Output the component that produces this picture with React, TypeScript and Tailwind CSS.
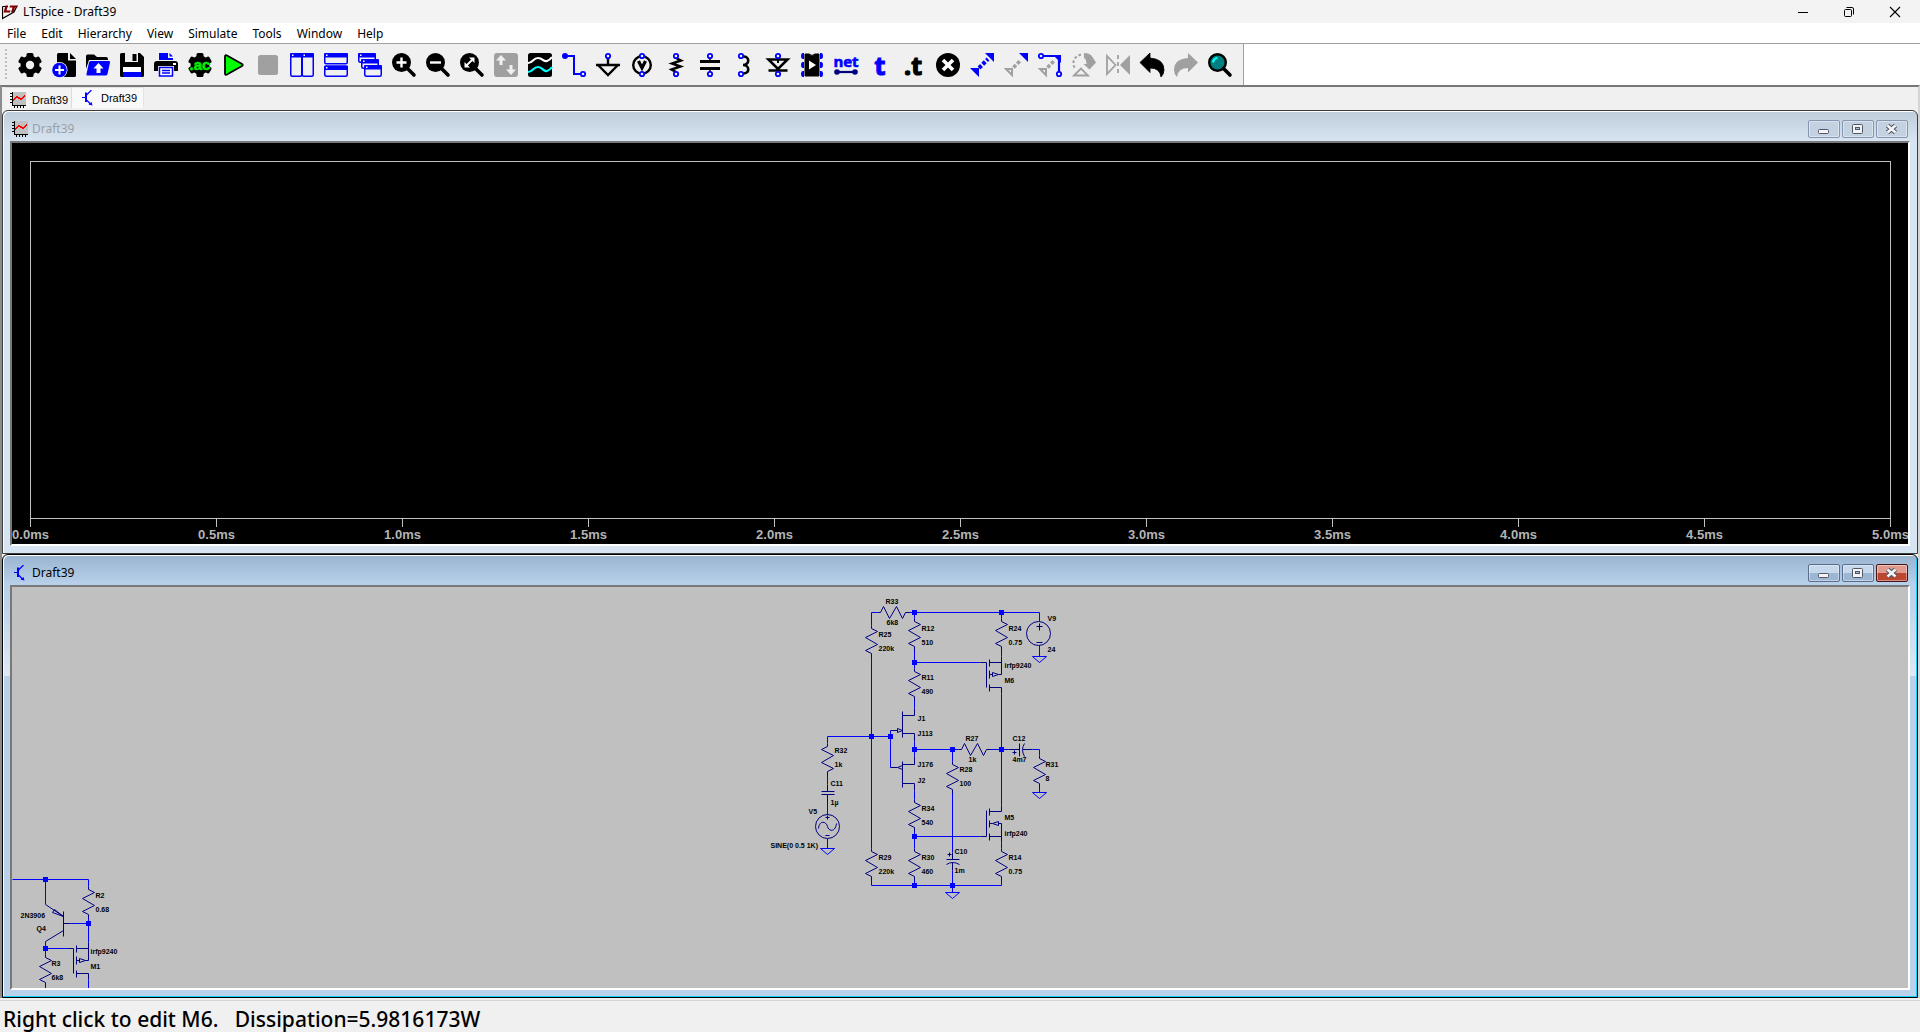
import React from 'react';

const BLUE = '#0000ff';
const NAVY = '#000080';
const GREY = '#a0a0a0';

const MENUS = ['File', 'Edit', 'Hierarchy', 'View', 'Simulate', 'Tools', 'Window', 'Help'];

const TICKS = ['0.0ms', '0.5ms', '1.0ms', '1.5ms', '2.0ms', '2.5ms', '3.0ms', '3.5ms', '4.0ms', '4.5ms', '5.0ms'];

/* ---------- toolbar icons, all drawn on a 24x24 grid ---------- */

const Gear = ({ hole = true }: { hole?: boolean }) => (
  <>
    <circle cx="12" cy="12" r="9.5" />
    {[0, 60, 120].map((a) => (
      <rect key={a} x="8.5" y="0" width="7" height="24" rx="1.5" transform={`rotate(${a} 12 12)`} />
    ))}
    {hole && <circle cx="12" cy="12" r="4.2" fill="#f0f0f0" />}
  </>
);

const Lens = () => (
  <>
    <circle cx="9.5" cy="9.5" r="9.5" />
    <path d="M15 15L22 22" stroke="#000" strokeWidth="3.6" strokeLinecap="round" />
  </>
);

// small open terminal used on the component icons
const Pin = ({ x, y }: { x: number; y: number }) => (
  <circle cx={x} cy={y} r="2.2" fill="#f0f0f0" stroke={BLUE} strokeWidth="1.8" />
);

// miniature window frame
const Pane = ({ x, y, w, h }: { x: number; y: number; w: number; h: number }) => (
  <g>
    <rect x={x + 0.75} y={y + 0.75} width={w - 1.5} height={h - 1.5} rx="1.5" fill="#f0f0f0" stroke={BLUE} strokeWidth="1.5" />
    <rect x={x} y={y} width={w} height="4.5" rx="1.2" fill={BLUE} />
    <rect x={x + 2} y={y + 1.5} width="1.5" height="1.5" fill="#fff" />
  </g>
);

const TOOLS: { label: string; art: React.ReactNode }[] = [
  { label: 'Settings', art: <Gear /> },
  {
    label: 'New schematic',
    art: (
      <>
        <path d="M5 1.5Q5 0 6.500 0H16V7.500H24V22.500Q24 24 22.500 24H5z" />
        <path d="M18 0L24 6H18z" />
        <circle cx="7.500" cy="17" r="8" fill="#f0f0f0" />
        <circle cx="7.500" cy="17" r="7.300" fill={BLUE} />
        <path d="M7.500 12.500V21.500M3 17H12" stroke="#fff" strokeWidth="2" />
      </>
    ),
  },
  {
    label: 'Open',
    art: (
      <>
        <path d="M0 3Q0 1.500 1.500 1.500H8L11 4H20Q22 4 22 6V7H3L0 16z" />
        <path d="M4.500 8H23Q24.500 8 24 9.500L21.500 21Q21 22.500 19.500 22.500H1.500Q0 22.500 .5 21L3 9.500Q3.500 8 4.500 8z" fill={BLUE} />
        <path d="M12.500 10L17.500 15.500H14.500V20H10.500V15.500H7.500z" fill="#fff" />
      </>
    ),
  },
  {
    label: 'Save',
    art: (
      <>
        <path d="M0 1.500Q0 0 1.500 0H20L24 4V22.500Q24 24 22.500 24H1.500Q0 24 0 22.500z" />
        <path d="M5 0H18V9H5z" fill="#f0f0f0" />
        <path d="M12.500 1H16.500V8H12.500z" />
        <path d="M3 14H21V19H3z" fill="#fff" />
        <path d="M3 19H21V24H3z" fill={BLUE} />
      </>
    ),
  },
  {
    label: 'Print',
    art: (
      <>
        <path d="M5 0H14V5H19V7H5z" fill={BLUE} />
        <path d="M15.500 0L19 3.500H15.500z" fill={BLUE} />
        <path d="M0 11Q0 8 3 8H21Q24 8 24 11V18H0z" />
        <path d="M19 10H22V12H19z" fill="#fff" />
        <path d="M4 13H20V24H4z" fill="#f0f0f0" />
        <path d="M5.500 14.500H18.500V23H5.500z" fill="#fff" stroke={BLUE} strokeWidth="1.500" />
        <path d="M8 17.500H16M8 20H16" stroke={BLUE} strokeWidth="1.300" />
      </>
    ),
  },
  {
    label: 'AC analysis',
    art: (
      <>
        <Gear hole={false} />
        <text x="12" y="16.500" textAnchor="middle" fill="#00f000" stroke="#00f000" strokeWidth="0.500" className="font-['Liberation_Sans'] text-[15px] font-bold">.ac</text>
      </>
    ),
  },
  { label: 'Run', art: <path d="M3 3.500Q3 1.500 5 2.500L20 11Q21.500 12 20 13L5 21.500Q3 22.500 3 20.500z" fill="#00ff00" stroke="#000" strokeWidth="1.800" /> },
  { label: 'Stop', art: <rect x="2" y="2" width="20" height="20" rx="2.500" fill={GREY} /> },
  { label: 'Tile vertically', art: <><Pane x={0} y={0} w={12.5} h={24} /><Pane x={11.5} y={0} w={12.5} h={24} /></> },
  { label: 'Tile horizontally', art: <><Pane x={0} y={0} w={24} h={11.5} /><Pane x={0} y={12.5} w={24} h={11.5} /></> },
  { label: 'Cascade', art: <><Pane x={0} y={0} w={18} h={10} /><Pane x={3} y={6} w={18} h={10} /><Pane x={6} y={12} w={18} h={12} /></> },
  { label: 'Zoom in', art: <><Lens /><path d="M9.500 4.500V14.500M4.500 9.500H14.500" stroke="#fff" strokeWidth="2.400" /></> },
  { label: 'Zoom out', art: <><Lens /><path d="M4 9.500H15" stroke="#fff" strokeWidth="2.400" /></> },
  {
    label: 'Zoom to fit',
    art: (
      <>
        <Lens />
        <path d="M6 13L13 6" stroke="#fff" strokeWidth="1.800" />
        <path d="M9 4.500H14.500V10zM4.500 9V14.500H10z" fill="#fff" />
      </>
    ),
  },
  {
    label: 'Autorange',
    art: (
      <>
        <rect width="24" height="24" rx="3" fill={GREY} />
        <path d="M7 2L12 7.500H8.500V12H5.500V7.500H2zM17 22L12 16.500H15.500V12H18.500V16.500H22z" fill="#f0f0f0" />
      </>
    ),
  },
  {
    label: 'Plot settings',
    art: (
      <>
        <rect width="24" height="24" rx="2.500" />
        <path d="M0 10C5 10 5 5 10 5S15 9 19 8Q22 7 24 4" fill="none" stroke="#fff" strokeWidth="2.200" />
        <path d="M0 19C5 19 5 14 10 14S15 19 19 18Q22 17 24 14" fill="none" stroke="#00ffff" strokeWidth="2.200" />
      </>
    ),
  },
  {
    label: 'Wire',
    art: (
      <>
        <path d="M3 3H12V21H19" fill="none" stroke={BLUE} strokeWidth="2" />
        <circle cx="3" cy="3" r="3" fill={BLUE} />
        <Pin x={21} y={21} />
      </>
    ),
  },
  { label: 'Ground', art: <><path d="M12 4V11M0 12H24M2.500 12.500L12 22L21.500 12.500" fill="none" stroke="#000" strokeWidth="2.400" /><Pin x={12} y={3} /></> },
  {
    label: 'Voltage source',
    art: (
      <>
        <circle cx="12" cy="12" r="8.800" fill="none" stroke="#000" strokeWidth="2.400" />
        <path d="M8.500 8L12 15L15.500 8" fill="none" stroke="#000" strokeWidth="3.200" />
        <Pin x={12} y={3} /><Pin x={12} y={21} />
      </>
    ),
  },
  { label: 'Resistor', art: <><path d="M12 5L17 7.500L8 10.500L16.500 13.500L7.500 16.500L12 19" fill="none" stroke="#000" strokeWidth="2.400" /><Pin x={12} y={3} /><Pin x={12} y={21} /></> },
  { label: 'Capacitor', art: <><path d="M2 8.500H22M2 15.500H22" stroke="#000" strokeWidth="2.800" /><path d="M12 4V8M12 16V20" stroke="#000" strokeWidth="1.500" /><Pin x={12} y={3} /><Pin x={12} y={21} /></> },
  { label: 'Inductor', art: <><path d="M11 3.500C18 3 18 12 11 12C18 12 18 21 11 20.500" fill="none" stroke="#000" strokeWidth="2.600" /><Pin x={9} y={3} /><Pin x={9} y={21} /></> },
  { label: 'Diode', art: <><path d="M2.500 6.500H21.500L12 16zM2.500 17.500H21.500" fill="none" stroke="#000" strokeWidth="2.600" /><path d="M12 7V10" stroke="#000" strokeWidth="2" /><Pin x={12} y={3} /><Pin x={12} y={21} /></> },
  {
    label: 'Component',
    art: (
      <>
        <path d="M5 1H9Q12 4 15 1H19V23H5z" stroke="#000" strokeWidth="1" />
        <path d="M9 7.500V16.500L16 12z" fill="#fff" />
        {[3, 12, 21].map((y) => (
          <React.Fragment key={y}>
            <path d={`M4 ${y - 3}H3Q1 ${y - 3} 1 ${y}T3 ${y + 3}H4z`} fill={BLUE} />
            <path d={`M20 ${y - 3}H21Q23 ${y - 3} 23 ${y}T21 ${y + 3}H20z`} fill={BLUE} />
          </React.Fragment>
        ))}
      </>
    ),
  },
  {
    label: 'Label net',
    art: (
      <>
        <text x="12" y="14" textAnchor="middle" fill={BLUE} stroke={BLUE} strokeWidth="0.600" className="font-['Open_Sans'] text-[15px] font-bold">net</text>
        <path d="M3 19H21" stroke={NAVY} strokeWidth="2.200" />
        <circle cx="3" cy="19" r="2.800" fill={NAVY} />
        <circle cx="21" cy="19" r="2.800" fill={NAVY} />
      </>
    ),
  },
  { label: 'Text', art: <text x="12" y="21.500" textAnchor="middle" fill={BLUE} stroke={BLUE} strokeWidth="1.200" className="font-['Open_Sans'] text-[25px] font-bold">t</text> },
  { label: 'SPICE directive', art: <text x="11" y="21.500" textAnchor="middle" stroke="#000" strokeWidth="1.200" className="font-['Open_Sans'] text-[25px] font-bold">.t</text> },
  { label: 'Delete', art: <><circle cx="12" cy="12" r="12" /><path d="M7 7L17 17M17 7L7 17" stroke="#fff" strokeWidth="3.600" /></> },
  {
    label: 'Move',
    art: <><path d="M15 0H24V9zM0 15H9V24z" fill={BLUE} /><path d="M9 15L18 6" stroke={BLUE} strokeWidth="4" strokeDasharray="3.500 1.800" /></>,
  },
  {
    label: 'Copy',
    art: <><path d="M15 0H24V9z" fill={BLUE} /><path d="M2 16H8V22z" fill="none" stroke={GREY} strokeWidth="2" /><path d="M9.500 14.500L17 7" stroke={GREY} strokeWidth="3.600" strokeDasharray="3.500 1.800" /></>,
  },
  {
    label: 'Drag',
    art: (
      <>
        <path d="M3 3H21V21" fill="none" stroke={BLUE} strokeWidth="2.200" />
        <path d="M15 2H23V10z" fill={BLUE} />
        <path d="M2 16H8V22z" fill="none" stroke={GREY} strokeWidth="2" />
        <path d="M9.500 14.500L16 8" stroke={GREY} strokeWidth="3.600" strokeDasharray="3.500 1.800" />
        <Pin x={3} y={3} /><Pin x={21} y={21} />
      </>
    ),
  },
  {
    label: 'Rotate',
    art: (
      <>
        <path d="M12 0C16 0 19 1.500 20.500 4L24 9.500L17.500 16.500L11.500 11H14.500C14.500 7 13 5.500 12 5z" fill={GREY} />
        <path d="M9 1.500Q1 4 1.500 11Q1.500 14 4 16" fill="none" stroke={GREY} strokeWidth="2" strokeDasharray="2.600 2.200" />
        <path d="M2 22.500L9 15.500L16 22.500z" fill="none" stroke={GREY} strokeWidth="1.800" />
      </>
    ),
  },
  {
    label: 'Mirror',
    art: <><path d="M1 3V21L9.500 12z" fill="none" stroke={GREY} strokeWidth="1.800" /><path d="M24 2V22L14 12z" fill={GREY} /><path d="M12 2V22" stroke={GREY} strokeWidth="1.800" strokeDasharray="4 3" /></>,
  },
  { label: 'Undo', art: <path d="M10 0V5Q24 6 24 17Q24 21 21 24Q20 15 10 15V19.500L0 9.500z" stroke="#000" strokeWidth="0.800" strokeLinejoin="round" /> },
  { label: 'Redo', art: <path d="M14 0V5Q0 6 0 17Q0 21 3 24Q4 15 14 15V19.500L24 9.500z" fill={GREY} /> },
  {
    label: 'Find',
    art: (
      <>
        <circle cx="9.500" cy="9.500" r="8.300" fill="#008080" stroke="#000" strokeWidth="2.400" />
        <path d="M15.500 15.500L22 22" stroke="#000" strokeWidth="3.600" strokeLinecap="round" />
        <path d="M5 9.500Q5.500 5.500 9.500 5" fill="none" stroke="#00ffff" strokeWidth="2.200" />
      </>
    ),
  },
];

/* ---------- document icons ---------- */

const WaveIcon = () => (
  <svg width="16" height="16" shapeRendering="crispEdges">
    <path d="M2 0H16V14H2z" fill="#c0c0c0" />
    <path d="M2.500 0V14M2 13.500H16M0 1.500H2M0 4.500H2M0 7.500H2M0 10.500H2M4.500 14V16M7.500 14V16M10.500 14V16M13.500 14V16" stroke="#000" />
    <path d="M3 8.500L7 5L11 7L15.500 3.500" fill="none" stroke="#f00" strokeWidth="1.500" />
  </svg>
);

const TransistorIcon = () => (
  <svg width="16" height="16">
    <path d="M2 7.500H6M11.500 0L6.500 5M6.500 10L11 14.500" stroke={BLUE} strokeWidth="1.200" />
    <path d="M6 2.500V12" stroke={BLUE} strokeWidth="2" />
    <path d="M12.500 15.500L8.500 14.500L11.500 12z" fill={BLUE} />
  </svg>
);

/* ---------- schematic ---------- */

const resistorsV: [number, number][] = [
  [871, 625], [914, 618], [914, 668], [1001, 618], [914, 799], [914, 848],
  [871, 848], [1001, 848], [952, 761], [1039, 755], [88, 886], [45, 954],
];

const grounds: [number, number][] = [[1039, 656], [827, 848], [952, 892], [1039, 792]];

const nodes: [number, number][] = [
  [914, 612], [1001, 612], [914, 662], [871, 736], [890, 736], [914, 749], [952, 749], [1001, 749],
  [914, 836], [914, 885], [952, 885], [45, 879], [88, 923], [45, 948],
];

const WIRES = [
  'M871 625V612H877M908 612H1039V621M914 612V618M1001 612V618M1001 649V656M914 649V668M914 662H980',
  'M871 656V848M871 879V885H1001V879M914 879V885M952 870V892M827 743V736H890M890 730V767',
  'M914 699V708M914 741V756M914 749H958M989 749H1008M1032 749H1039V755M952 749V761M952 792V852',
  'M1001 693V805M914 830V848M914 836H980M1001 842V848M914 790V799M827 774V784M827 800V814M827 838V848',
  'M1039 645V656M1039 786V792',
  'M12 879H88V886M45 879V904M88 917V942M70 923H88M45 941V954M45 948H68M88 979V988M45 985V988',
];

const LABELS: [number, number, string][] = [
  [886, 604, 'R33'], [887, 625, '6k8'], [879, 637, 'R25'], [879, 651, '220k'],
  [922, 631, 'R12'], [922, 645, '510'], [1009, 631, 'R24'], [1009, 645, '0.75'],
  [1048, 621, 'V9'], [1048, 652, '24'], [1005, 668, 'irfp9240'], [1005, 683, 'M6'],
  [922, 680, 'R11'], [922, 694, '490'], [918, 721, 'J1'], [918, 736, 'J113'],
  [835, 753, 'R32'], [835, 767, '1k'], [966, 741, 'R27'], [969, 762, '1k'],
  [1013, 741, 'C12'], [1013, 762, '4m7'], [960, 772, 'R28'], [960, 786, '100'],
  [1046, 767, 'R31'], [1046, 781, '8'], [918, 767, 'J176'], [918, 783, 'J2'],
  [831, 786, 'C11'], [831, 805, '1µ'], [809, 814, 'V5'], [771, 848, 'SINE(0 0.5 1K)'],
  [922, 811, 'R34'], [922, 825, '540'], [1005, 820, 'M5'], [1005, 836, 'irfp240'],
  [955, 854, 'C10'], [955, 873, '1m'], [879, 860, 'R29'], [879, 874, '220k'],
  [922, 860, 'R30'], [922, 874, '460'], [1009, 860, 'R14'], [1009, 874, '0.75'],
  [96, 898, 'R2'], [96, 912, '0.68'], [21, 918, '2N3906'], [37, 931, 'Q4'],
  [91, 954, 'irfp9240'], [91, 969, 'M1'], [52, 966, 'R3'], [52, 980, '6k8'],
];

// source at the top
const Pmos = ({ x, y }: { x: number; y: number }) => (
  <path transform={`translate(${x} ${y})`} d="M-21 0H-15V25M-12 -3V4M-12 8V16M-12 22V29M-12 0H0M-12 12H-9M-9 10V14L-3 12zM-3 12H0V-6M-12 25H0V31" />
);

const Schematic = () => (
  <svg className="block h-full w-full">
    <g transform="translate(-11.5 -586.5)" fill="none" stroke={NAVY} strokeWidth="1">
      {WIRES.map((d) => <path key={d} d={d} stroke={BLUE} />)}
      {resistorsV.map(([x, y]) => (
        <path key={`${x}-${y}`} d={`M${x} ${y}v3l6 3l-12 6l12 7l-12 6l6 3v4`} />
      ))}
      <path d="M827 743v3l-6 3l12 6l-12 7l12 6l-6 3v4" />
      <path d="M877 612h3l3 -6l6 12l7 -12l6 12l3 -6h4" />
      <path d="M958 749h3l3 -6l6 12l7 -12l6 12l3 -6h4" />
      {grounds.map(([x, y]) => (
        <path key={`${x}-${y}`} d={`M${x - 7} ${y}h14l-7 6z`} stroke={BLUE} />
      ))}

      {/* V9 */}
      <circle cx="1038" cy="633" r="12" />
      <path d="M1036 626h6M1039 623v7M1036 642h6" />
      {/* V5 */}
      <circle cx="827" cy="826" r="12" />
      <path d="M825 817h4M827 815v4M825 835h4M818 828C819 819 826 821 827 826S835 832 836 823" />

      {/* capacitors C11, C10, C12 */}
      <path d="M821 791h13M821 794h13M827 784v7M827 794v7" />
      <path d="M946 859h13M946 864q6 -4 13 0M952 852v7M952 862v8M947 854h4M949 852v4" />
      <path d="M1019 743v13M1024 743q-4 6 0 13M1008 749h11M1022 749h10M1012 752h4M1014 750v4" />

      {/* J1, J2 */}
      <path d="M902 711v26M902 715h12v-7M902 733h12v8M890 730h7M897 728v4l5 -2z" />
      <path d="M902 761v26M902 764h12v-8M902 783h12v7M890 767h7M902 765v4l-5 -2z" />

      <Pmos x={1001} y={662} />
      <Pmos x={88} y={948} />
      {/* M5 */}
      <path d="M980 836h6v-26M989 808v7M989 820v7M989 833v7M1001 805v6h-12M989 823h3M998 821v4l-6 -2zM998 823h3v19M989 836h12" />
      {/* Q4 */}
      <path d="M63 911v25M63 923h7M45 904l18 12M63 930l-18 11M54 909l-2 3l11 4z" />

      {nodes.map(([x, y]) => (
        <rect key={`${x}-${y}`} x={x - 2} y={y - 2} width="4" height="4" fill={BLUE} stroke={BLUE} />
      ))}
      <g transform="translate(-1 -1)" stroke="none" fill="#000" className="font-['Liberation_Sans',sans-serif] text-[7px] font-bold">
        {LABELS.map(([x, y, t]) => (
          <text key={`${x}-${y}`} x={x} y={y}>{t}</text>
        ))}
      </g>
    </g>
  </svg>
);

/* ---------- plot ---------- */

const Plot = () => (
  <div className="flex h-full flex-col bg-black pt-[18px] pr-[17px] pl-[18px]">
    <div className="flex-1 border border-[#c0c0c0]" />
    <div className="flex justify-between">
      {TICKS.map((t) => (
        <div key={t} className="flex w-px flex-col items-center">
          <span className="h-2 w-px bg-[#c0c0c0]" />
          <span className="h-[17px] font-['Liberation_Sans',sans-serif] text-[13px] leading-4 font-bold whitespace-nowrap text-[#b4b4b4]">{t}</span>
        </div>
      ))}
    </div>
  </div>
);

/* ---------- MDI child window ---------- */

interface ChildProps {
  active?: boolean;
  icon: React.ReactNode;
  title: string;
  children: React.ReactNode;
}

const CAPTION_ICONS = [
  { label: 'Minimize', art: <rect x="3.500" y="8.500" width="10" height="4" rx="1" fill="#f4f4f4" stroke="#4f5668" /> },
  {
    label: 'Maximize',
    art: (
      <>
        <rect x="3.500" y="3.500" width="10" height="9" rx="1" fill="#f4f4f4" stroke="#4f5668" />
        <rect x="6.500" y="6.500" width="4" height="2" fill="#a9bdd4" stroke="#4f5668" />
      </>
    ),
  },
  {
    label: 'Close',
    art: (
      <>
        <path d="M4.500 4.500L12.500 11.500M12.500 4.500L4.500 11.500" stroke="#4f5668" strokeWidth="4.800" />
        <path d="M4.500 4.500L12.500 11.500M12.500 4.500L4.500 11.500" stroke="#f4f4f4" strokeWidth="2.600" />
      </>
    ),
  },
];

const ChildWindow: React.FC<ChildProps> = ({ active, icon, title, children }) => (
  <section
    className={
      active
        ? 'flex min-h-0 flex-1 flex-col rounded-t-md border border-black bg-[linear-gradient(to_bottom,#99b4d1_0,#b9d1ea_30px,#b9d1ea_40px,#dfe9f5_121px,#b9d1ea_121px)] px-[7px] pb-[7px] shadow-[inset_-1px_-1px_0_#10d0f8,inset_1px_1px_0_#fff]'
        : 'flex min-h-0 flex-1 flex-col rounded-t-md border border-[#3c3c3c] bg-[linear-gradient(to_bottom,#bfcddb_0,#d7e4f2_30px)] px-[7px] pb-[7px] shadow-[inset_1px_1px_0_#fff]'
    }
  >
    <header className="flex h-[30px] shrink-0 items-center pt-[6px]">
      <span className="ml-[2px] w-[20px]">{icon}</span>
      <h2 className={active ? 'text-[12px] leading-4 text-black' : 'text-[12px] leading-4 text-[#9aa0a6]'}>{title}</h2>
      <div className="mr-[2px] ml-auto flex gap-[2px]">
        {CAPTION_ICONS.map(({ label, art }) => {
          let look = 'border-[#8595b2] bg-[#c3d1e0]';
          if (active) look = 'border-[#5a6d8c] bg-linear-to-b from-[#c5d8ec] from-50% to-[#9cb6d3] to-50%';
          if (active && label === 'Close') look = 'border-[#43141a] bg-linear-to-b from-[#e09a8e] from-50% to-[#bd4630] to-50%';
          return (
            <button
              key={label}
              aria-label={label}
              className={`flex h-[18px] w-[32px] items-center justify-center rounded-[2px] border shadow-[inset_0_0_0_1px_#ffffff66] ${look}`}
            >
              <svg width="18" height="16">{art}</svg>
            </button>
          );
        })}
      </div>
    </header>
    <div className="min-h-0 flex-1 overflow-hidden border-2 border-t-[#787878] border-r-white border-b-white border-l-[#787878] bg-[#c0c0c0]">
      {children}
    </div>
  </section>
);

export default function App() {
  return (
    <div className="flex h-screen flex-col overflow-hidden bg-[#f0f0f0] font-['Noto_Sans','Open_Sans',sans-serif] text-black">
      {/* title bar */}
      <div className="flex h-[23px] items-center bg-[#f3f3f3]">
        <svg className="ml-[2px]" width="16" height="17">
          <path d="M.5 3.500H6M.5 3.500V15.500L12 9L15 3" fill="none" stroke="#000" strokeWidth="1.200" />
          <path d="M3.500 2.500H6L4.500 7.500H8.500L8 9.500H1.500zM8 2.500H16L15 4.500H13L11.500 9.500H9L10.500 4.500H7.500z" fill="#800000" />
        </svg>
        <h1 className="ml-[5px] text-[12px] leading-4">LTspice - Draft39</h1>
        <div className="mr-[2px] ml-auto flex">
          <button aria-label="Minimize" className="flex h-[21px] w-[46px] items-center justify-center">
            <svg width="12" height="12"><path d="M1 6.500H11" stroke="#000" /></svg>
          </button>
          <button aria-label="Restore" className="flex h-[21px] w-[46px] items-center justify-center">
            <svg width="12" height="12" fill="none" stroke="#000">
              <rect x="1.500" y="3.500" width="7" height="7" rx="1" />
              <path d="M3.500 1.500H9Q10.500 1.500 10.500 3V8.500" />
            </svg>
          </button>
          <button aria-label="Close" className="flex h-[21px] w-[46px] items-center justify-center">
            <svg width="12" height="12"><path d="M1 1L11 11M11 1L1 11" stroke="#000" strokeWidth="1.100" /></svg>
          </button>
        </div>
      </div>

      {/* menu bar */}
      <nav className="flex h-[21px] items-center gap-[15px] border-b border-[#a0a0a0] bg-white pt-[2px] pl-[7px]">
        {MENUS.map((m) => (
          <button key={m} className="text-[12px] leading-4">{m}</button>
        ))}
      </nav>

      {/* toolbar */}
      <div className="flex h-[41px] shrink-0 bg-white">
        <div className="flex items-center border-r border-[#a0a0a0] bg-[#f0f0f0] pr-[6px] pl-[5px]">
          <span className="mr-[6px] h-8 w-[2px] bg-[repeating-linear-gradient(to_bottom,#bdbdbd_0,#bdbdbd_2px,transparent_2px,transparent_4px)]" />
          {TOOLS.map(({ label, art }) => (
            <button key={label} aria-label={label} className="flex h-[34px] w-[34px] items-center justify-center">
              <svg width="24" height="24" className="overflow-visible">{art}</svg>
            </button>
          ))}
        </div>
      </div>

      {/* workspace */}
      <main className="flex min-h-0 flex-1 flex-col border-t-2 border-r-2 border-l-2 border-t-[#787878] border-r-[#d4d4d4] border-l-[#8c8c8c]">
        <div className="flex h-[23px] shrink-0 pl-[3px] font-['Liberation_Sans',sans-serif] text-[11px] leading-4">
          <button className="flex h-[21px] w-[67px] items-center gap-[6px] border-t border-r border-[#dcdcdc] bg-[#f3f3f3] pt-[4px] pl-[5px]">
            <WaveIcon />Draft39
          </button>
          <button className="flex h-[21px] w-[72px] items-center gap-[5px] border border-t-[#e4e4e4] border-r-[#e4e4e4] border-b-[#f9f9f9] border-l-[#f9f9f9] bg-[#f9f9f9] pl-[7px]">
            <TransistorIcon />Draft39
          </button>
        </div>
        <ChildWindow icon={<WaveIcon />} title="Draft39"><Plot /></ChildWindow>
        <ChildWindow active icon={<TransistorIcon />} title="Draft39"><Schematic /></ChildWindow>
      </main>

      {/* status bar */}
      <footer className="mt-[2px] flex h-8 shrink-0 items-center border-t border-[#d4d4d4] pt-[4px] pl-[3px] text-[21px] leading-6 font-medium whitespace-pre">
        {'Right click to edit M6.   Dissipation=5.9816173W'}
      </footer>
    </div>
  );
}
